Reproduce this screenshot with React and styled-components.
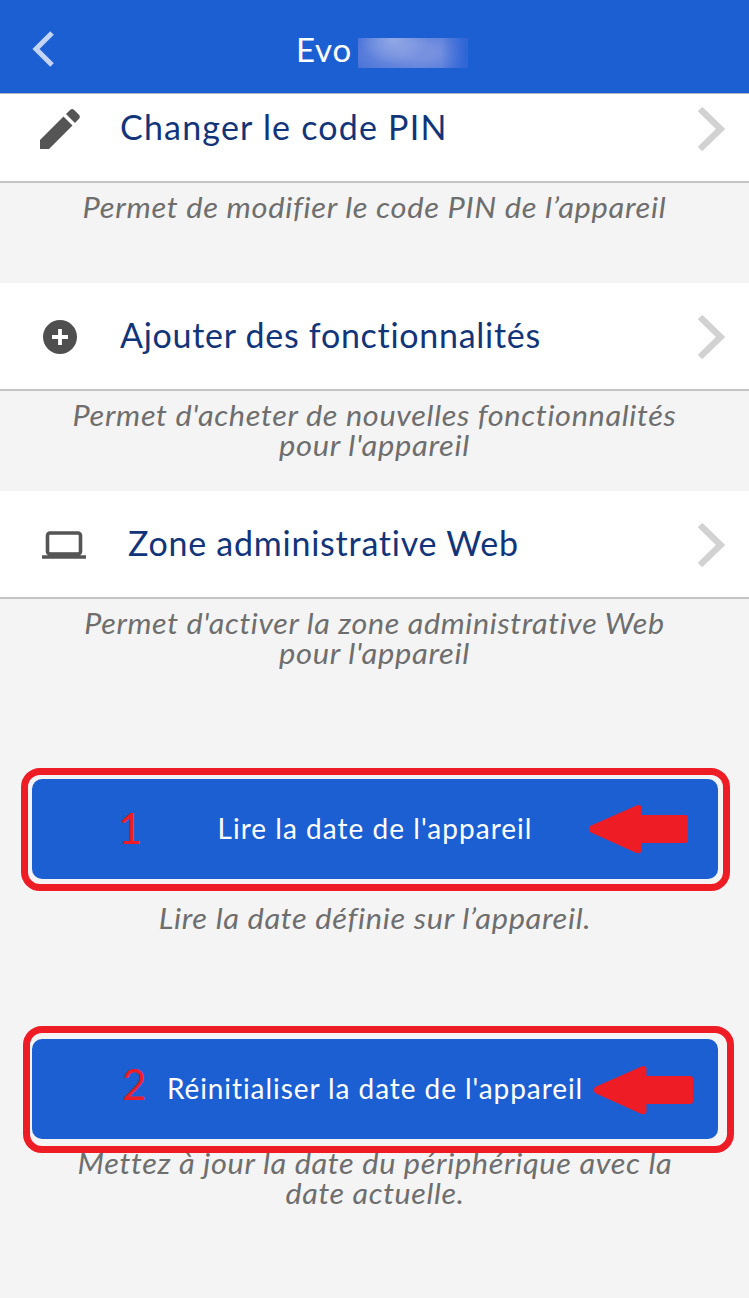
import React from 'react';
import styled, { createGlobalStyle } from 'styled-components';

const GlobalStyle = createGlobalStyle`
  body {
    margin: 0;
    background: #f4f4f4;
    font-family: Lato, 'Liberation Sans', sans-serif;
  }
`;

const Screen = styled.div`
  width: 749px;
  height: 1298px;
  overflow: hidden;
  background: #f4f4f4;
`;

const Header = styled.header`
  position: relative;
  z-index: 1;
  box-sizing: border-box;
  display: flex;
  align-items: center;
  height: 94px;
  padding: 6px 32px 0;
  border-bottom: 1px solid #b0b4c0;
  background: #1c5fd3;
`;

const BackIcon = styled.svg`
  width: 22px;
  height: 36px;
  margin-top: -2px;
`;

const Title = styled.h1`
  flex: 1;
  display: flex;
  align-items: center;
  margin: -1px 0 0 242px;
  color: #fff;
  font-size: 33px;
  font-weight: 400;
  letter-spacing: 0.8px;
  line-height: 40px;
`;

const HiddenName = styled.span`
  width: 110px;
  height: 30px;
  margin: 7px 0 0 6px;
  background:
    linear-gradient(90deg, rgba(47, 101, 214, 0) 76%, #2f65d6 98%),
    radial-gradient(ellipse 34px 24px at 36px 2px, #92a9e6, rgba(119, 145, 223, 0)),
    radial-gradient(ellipse 80px 34px at 60px 14px, #7791df 20%, #4f77d9 80%, #3768d6);
`;

const Settings = styled.main`
  margin-top: -19px;
`;

const Item = styled.section`
  height: 208px;
`;

const Row = styled.div`
  box-sizing: border-box;
  display: flex;
  align-items: center;
  height: 108px;
  padding: 2px 24px 0 38px;
  border-bottom: 2px solid #c4c4c4;
  background: #fff;
`;

const RowIcon = styled.svg`
  flex: none;
  width: 50px;
  height: 44px;
`;

const RowLabel = styled.span`
  flex: 1;
  margin: -5px 0 0 ${({ $indent }) => $indent || 32}px;
  color: #12357a;
  font-size: 34px;
  line-height: 42px;
  letter-spacing: ${({ $spacing }) => $spacing}px;
  white-space: nowrap;
`;

const Chevron = styled.svg`
  width: 28px;
  height: 46px;
`;

const Caption = styled.p`
  margin: 0;
  padding-top: ${({ $top }) => $top || 9}px;
  color: #6e6e6e;
  font-size: 28px;
  font-style: italic;
  line-height: 30px;
  text-align: center;
`;

const Line = styled.span`
  display: block;
  letter-spacing: 0.6px;
  white-space: nowrap;
  transform: scaleX(${({ $stretch }) => $stretch});
`;

const Actions = styled.div`
  padding: 80px 31px 0 32px;
`;

const Action = styled.div`
  height: 260px;
`;

const Button = styled.button`
  position: relative;
  display: block;
  width: 686px;
  height: 100px;
  padding: 0 0 2px;
  border: 0;
  border-radius: 10px;
  background: #1c5fd3;
  color: #fff;
  font-family: inherit;
  font-size: 28px;
  letter-spacing: ${({ $spacing }) => $spacing}px;
  white-space: nowrap;
`;

const Frame = styled.span`
  position: absolute;
  box-sizing: border-box;
  top: ${({ $top }) => $top}px;
  left: ${({ $left }) => $left}px;
  width: ${({ $width }) => $width}px;
  height: ${({ $height }) => $height}px;
  border: 7px solid #ee1c24;
  border-radius: 19px;
`;

const StepNumber = styled.span`
  position: absolute;
  top: ${({ $top }) => $top}px;
  left: ${({ $left }) => $left}px;
  color: #ee1c24;
  font-size: 42px;
  line-height: 50px;
  letter-spacing: 0;
`;

const Arrow = styled.svg`
  position: absolute;
  top: ${({ $top }) => $top}px;
  left: ${({ $left }) => $left}px;
  width: 99px;
  height: 50px;
`;

const icons = {
  pencil: (
    <RowIcon viewBox="0 0 50 44" fill="#555">
      <path d="M2 42v-9L25.500 9.500l9 9L11 42zM28 7l4.300-4.300q1.800-1.500 3.600 0L41.200 8q1.500 1.800 0 3.600L37 16z" />
    </RowIcon>
  ),
  plus: (
    <RowIcon viewBox="0 0 50 44">
      <circle cx="22" cy="22" r="17" fill="#4f4f4f" />
      <path d="M22 14v16M14 22h16" stroke="#fff" strokeWidth="3.800" />
    </RowIcon>
  ),
  laptop: (
    <RowIcon viewBox="0 0 50 44" fill="none" stroke="#555">
      <rect x="9.500" y="10" width="33" height="21" rx="2.500" strokeWidth="3.600" />
      <path d="M4 34h44" strokeWidth="3.400" />
      <path d="M10 31.500h32" strokeWidth="3.400" />
    </RowIcon>
  ),
};

const items = [
  {
    icon: 'pencil',
    label: 'Changer le code PIN',
    spacing: 1.2,
    lines: [['Permet de modifier le code PIN de l’appareil', 1.102]],
  },
  {
    icon: 'plus',
    label: 'Ajouter des fonctionnalités',
    spacing: 0.72,
    lines: [
      ["Permet d'acheter de nouvelles fonctionnalités", 1.095],
      ["pour l'appareil", 1.104],
    ],
  },
  {
    icon: 'laptop',
    label: 'Zone administrative Web',
    spacing: 0.76,
    indent: 40,
    lines: [
      ["Permet d'activer la zone administrative Web", 1.087],
      ["pour l'appareil", 1.104],
    ],
  },
];

const actions = [
  {
    label: "Lire la date de l'appareil",
    spacing: 1.03,
    step: { value: 1, top: 24, left: 86 },
    frame: { $top: -11, $left: -11, $width: 709, $height: 123 },
    arrow: { $top: 25, $left: 557 },
    captionTop: 24,
    lines: [['Lire la date définie sur l’appareil.', 1.1]],
  },
  {
    label: "Réinitialiser la date de l'appareil",
    spacing: 0.93,
    step: { value: 2, top: 20, left: 90 },
    frame: { $top: -13, $left: -9, $width: 711, $height: 127 },
    arrow: { $top: 26, $left: 562 },
    captionTop: 9,
    lines: [
      ['Mettez à jour la date du périphérique avec la', 1.096],
      ['date actuelle.', 1.085],
    ],
  },
];

function Lines({ lines }) {
  return lines.map(([text, stretch]) => (
    <Line key={text} $stretch={stretch}>{text}</Line>
  ));
}

function SettingItem({
  icon, label, spacing, indent, lines,
}) {
  return (
    <Item>
      <Row>
        {icons[icon]}
        <RowLabel $spacing={spacing} $indent={indent}>{label}</RowLabel>
        <Chevron viewBox="0 0 28 46" fill="none" stroke="#d2d2d2" strokeWidth="6.500">
          <path d="M3 3L23.500 23L3 43" />
        </Chevron>
      </Row>
      <Caption><Lines lines={lines} /></Caption>
    </Item>
  );
}

function DateAction({
  label, spacing, step, frame, arrow, captionTop, lines,
}) {
  return (
    <Action>
      <Button type="button" $spacing={spacing}>
        {label}
        <StepNumber $top={step.top} $left={step.left}>{step.value}</StepNumber>
        <Arrow {...arrow} viewBox="0 0 100 50" preserveAspectRatio="none" fill="#ee1c24">
          <path d="M1 22L48 1.500Q52 0 53 3v8h44q3 0 3 3v22q0 3-3 3H53v8q-1 3-5 2L1 28q-2-3 0-6z" />
        </Arrow>
        <Frame {...frame} />
      </Button>
      <Caption $top={captionTop}><Lines lines={lines} /></Caption>
    </Action>
  );
}

function App() {
  return (
    <Screen>
      <GlobalStyle />
      <Header>
        <BackIcon viewBox="0 0 22 36" fill="none" stroke="#c5d5f5" strokeWidth="5">
          <path d="M20 2L4 18L20 34" />
        </BackIcon>
        <Title>
          Evo
          <HiddenName />
        </Title>
      </Header>
      <Settings>
        {items.map((item) => <SettingItem key={item.label} {...item} />)}
        <Actions>
          {actions.map((action) => <DateAction key={action.label} {...action} />)}
        </Actions>
      </Settings>
    </Screen>
  );
}

export default App;
